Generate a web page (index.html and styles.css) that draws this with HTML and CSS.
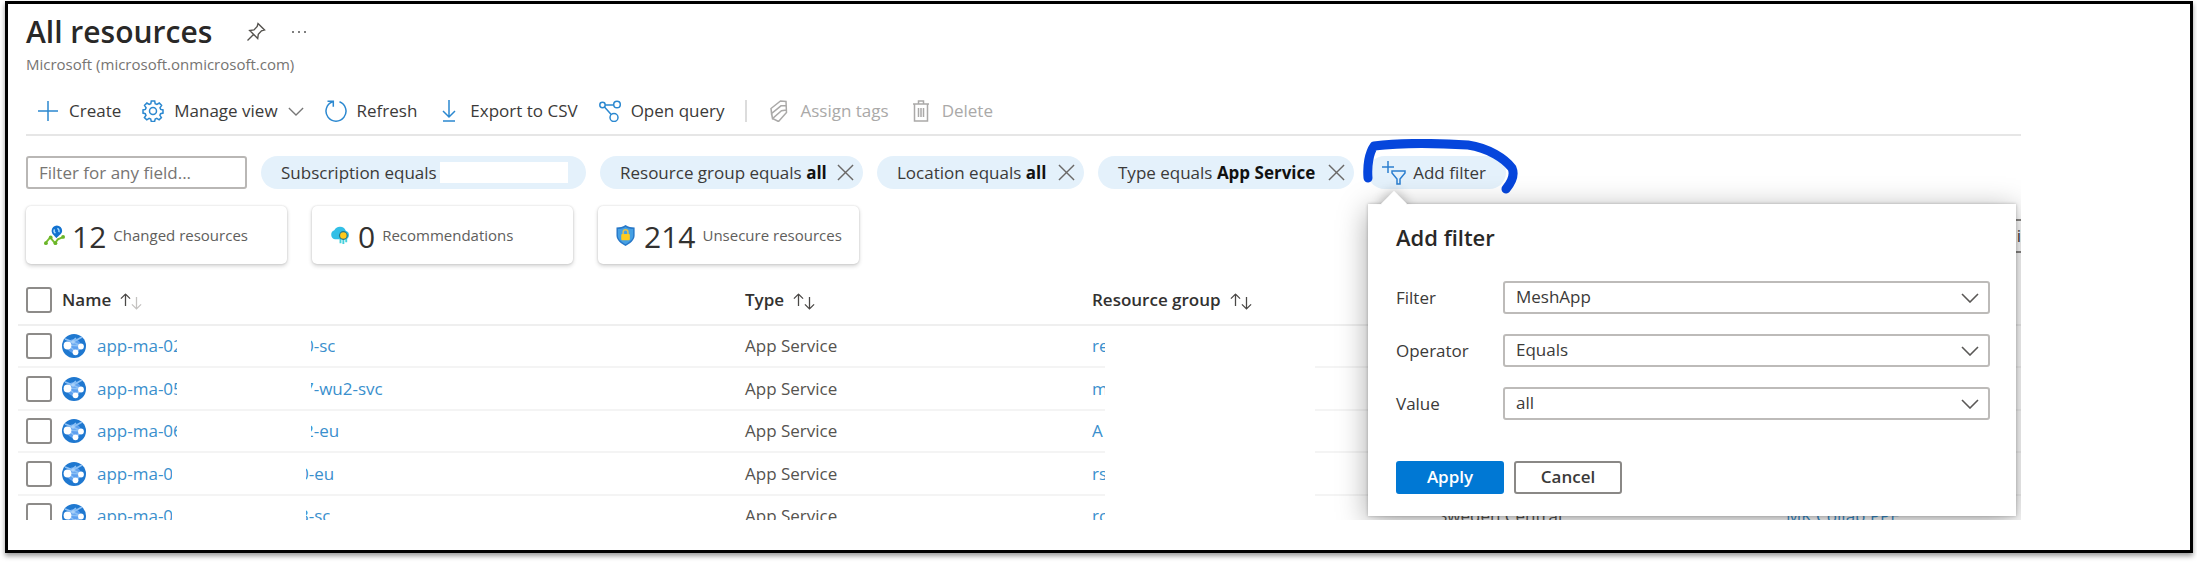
FILE: index.html
```html
<!DOCTYPE html>
<html lang="en">
<head>
<meta charset="utf-8">
<title>All resources</title>
<link rel="stylesheet" href="styles.css">
</head>
<body>
<svg class="defs" aria-hidden="true">
  <symbol id="chevron" viewBox="0 0 18 10"><path d="M1 1l8 8 8-8"/></symbol>
  <symbol id="close" viewBox="0 0 18 18"><path d="M1 1l16 16M17 1L1 17"/></symbol>
  <symbol id="up" viewBox="0 0 12 15"><path d="M6 14V1M1 6l5-5 5 5"/></symbol>
  <symbol id="down" viewBox="0 0 12 15"><path d="M6 1v13M1 9l5 5 5-5"/></symbol>
  <symbol id="globe" viewBox="0 0 24 24">
    <circle cx="12" cy="12" r="12" fill="#1f78d0"/>
    <circle cx="12" cy="12" r="7" fill="#5ea0ef"/>
    <path d="M3 5l8 3 9-5M5 12l9-8M6 11l13 1M14 18l5-6M14 18L6 11M11 8l8 4" stroke="#8cc0f5" stroke-width="1.6" fill="none"/>
    <circle cx="5.500" cy="11.500" r="3.900" fill="#fff"/>
    <circle cx="19" cy="12.500" r="2.900" fill="#fff"/>
    <circle cx="13.500" cy="18.300" r="2.900" fill="#fff"/>
    <circle cx="11" cy="8" r="1.800" fill="#a9d0f8"/>
  </symbol>
</svg>
<div class="frame">
<main class="view">
  <header class="heading">
    <h1>All resources</h1>
    <button class="plain" aria-label="Pin"><svg class="pin" viewBox="0 0 20 20"><path d="M12 1.500l6.500 6.500-3 .8-3.200 3.400-.6 4.300-8-8 4.300-.6 3.200-3.400zM7.500 12.500L1.500 18.500"/></svg></button>
    <button class="plain" aria-label="More"><svg class="more" viewBox="0 0 16 4"><circle cx="2" cy="2" r="1"/><circle cx="8" cy="2" r="1"/><circle cx="14" cy="2" r="1"/></svg></button>
  </header>
  <p class="tenant">Microsoft (microsoft.onmicrosoft.com)</p>

  <nav class="toolbar">
    <button class="tool"><svg class="ico" viewBox="0 0 22 22"><path d="M11 1v20M1 11h20"/></svg>Create</button>
    <button class="tool"><svg class="ico" viewBox="0 0 22 22"><circle cx="11" cy="11" r="3.500"/><path d="M9.300 1h3.400l.5 2.800 1.700.7L17.300 3l2.300 2.400-1.600 2.400.7 1.600 2.300.5v3.200l-2.400.6-.7 1.600 1.500 2.300-2.300 2.300-2.300-1.500-1.600.7-.6 2.400H9.300l-.6-2.400-1.600-.7-2.300 1.500-2.400-2.300L4 15.300l-.7-1.600L1 13.100V9.900l2.400-.5.7-1.600L2.500 5.400 4.900 3l2.300 1.500 1.600-.7z"/></svg>Manage view<svg class="chev" viewBox="0 0 18 10"><use href="#chevron"/></svg></button>
    <button class="tool"><svg class="ico" viewBox="0 0 22 22"><path d="M14.500 1.800a10 10 0 1 1-7 0M2.500 1.200h5.800v5.600"/></svg>Refresh</button>
    <button class="tool"><svg class="ico" viewBox="0 0 22 22"><path d="M11 0v17M5 11l6 6 6-6M5 21h12"/></svg>Export to CSV</button>
    <button class="tool"><svg class="ico" viewBox="0 0 22 22"><circle cx="3.500" cy="5" r="2.700"/><circle cx="18" cy="4.500" r="3.300"/><circle cx="15" cy="17.500" r="4"/><path d="M6.200 5h8.500M5.500 7l6.700 7.600"/></svg>Open query</button>
    <span class="divider"></span>
    <button class="tool" disabled><svg class="ico" viewBox="0 0 22 22"><path d="M3 8.500L12.500 1l5.500.5.500 11-8 9-6-3zM3 8.500l.5 5 9.500-7.700 5.300-.3M3.500 13.500l1 5 9-7.700 5-.8"/></svg>Assign tags</button>
    <button class="tool" disabled><svg class="ico" viewBox="0 0 22 22"><path d="M3 4h16M8.500 4V1h5v3M4.500 4v17h13V4M8.500 8v9M11 8v9M13.500 8v9"/></svg>Delete</button>
  </nav>

  <div class="filters">
    <input class="search" type="text" placeholder="Filter for any field..." aria-label="Filter for any field">
    <button class="chip chip-sub"><span>Subscription equals</span><span class="blank"></span></button>
    <button class="chip chip-group"><span>Resource group equals <b>all</b></span><svg class="x" viewBox="0 0 18 18"><use href="#close"/></svg></button>
    <button class="chip chip-loc"><span>Location equals <b>all</b></span><svg class="x" viewBox="0 0 18 18"><use href="#close"/></svg></button>
    <button class="chip chip-type"><span>Type equals <b>App Service</b></span><svg class="x" viewBox="0 0 18 18"><use href="#close"/></svg></button>
    <div class="add">
      <button class="chip chip-add"><svg class="funnel" viewBox="0 0 24 24"><path d="M6 0v12M0 6h12M10 10h13v2l-5 6v5h-3v-5l-5-6z"/></svg>Add filter</button>
      <form class="callout">
        <div class="beak"></div>
        <div class="callout-body">
          <h2>Add filter</h2>
          <div class="fields">
            <label for="f">Filter</label>
            <div class="pick"><select id="f"><option>MeshApp</option></select><svg viewBox="0 0 18 10"><use href="#chevron"/></svg></div>
            <label for="o">Operator</label>
            <div class="pick"><select id="o"><option>Equals</option></select><svg viewBox="0 0 18 10"><use href="#chevron"/></svg></div>
            <label for="v">Value</label>
            <div class="pick"><select id="v"><option>all</option></select><svg viewBox="0 0 18 10"><use href="#chevron"/></svg></div>
          </div>
          <div class="actions">
            <button type="button" class="btn primary">Apply</button>
            <button type="button" class="btn">Cancel</button>
          </div>
        </div>
      </form>
      <svg class="ink" viewBox="0 0 160 60"><path d="M10 39C9 27 11 14 16 7C40 4 78 4 110 6C131 9 147 20 154 29C157 36 153 44 148 50"/></svg>
    </div>
  </div>

  <section class="cards">
    <div class="card">
      <svg class="card-ico" viewBox="0 0 22 22"><path d="M1.500 19l5-6 5 6 3-4 6-2.500" fill="none" stroke="#76bc2d" stroke-width="2"/><g fill="#6bb52a"><circle cx="2" cy="19" r="2"/><circle cx="7" cy="13" r="2"/><circle cx="12" cy="19" r="2"/><circle cx="20" cy="12.500" r="2"/></g><path d="M13 14c-2-3-5-4.500-5-8a5.500 5.500 0 0 1 11 0c0 3.500-4 5-6 8z" fill="#1272d0"/><path d="M11 4.500a3 3 0 0 0 1 4M14 3.500a3 3 0 0 1 1.500 4" stroke="#a9dcff" stroke-width="1.500" fill="none"/></svg>
      <strong>12</strong><span>Changed resources</span>
    </div>
    <div class="card">
      <svg class="card-ico" viewBox="0 0 22 22"><path d="M5 15a5 5 0 0 1-.5-9.500A6.500 6.500 0 0 1 16.500 6a4.700 4.700 0 0 1 0 9z" fill="#32bfe6"/><path d="M11 13v6M14 13v7M17 13v5" stroke="#44d0dc" stroke-width="2"/><circle cx="14" cy="11" r="4.600" fill="#2c7480"/><circle cx="14" cy="11" r="3.400" fill="#ffca1a"/></svg>
      <strong>0</strong><span>Recommendations</span>
    </div>
    <div class="card">
      <svg class="card-ico" viewBox="0 0 22 22"><path d="M10 0c3 2 6 2.500 9.500 2.500V11c0 5-5 8.500-9.500 11C5.500 19.500.5 16 .5 11V2.500C4 2.500 7 2 10 0z" fill="#2878c8"/><path d="M10 2c2.500 1.500 5 2 8 2.200V11c0 4-4 7-8 9.200C6 18 2 15 2 11V4.200C5 4 7.500 3.500 10 2z" fill="#45a0e4"/><path d="M7.500 10V7.500a2.500 2.500 0 0 1 5 0V10" fill="none" stroke="#e4c04a" stroke-width="1.600"/><rect x="5.500" y="9.500" width="9" height="6.500" rx="1" fill="#ffcb1f"/></svg>
      <strong>214</strong><span>Unsecure resources</span>
    </div>
    <button class="edge">i</button>
  </section>

  <table class="grid">
    <colgroup><col class="c-check"><col class="c-name"><col class="c-type"><col class="c-rg"><col class="c-mask"><col class="c-gap"><col class="c-loc"><col></colgroup>
    <thead><tr>
      <th><input type="checkbox" aria-label="Select all"></th>
      <th><span class="sort">Name<svg class="arr" viewBox="0 0 12 15"><use href="#up"/></svg><svg class="arr low dim" viewBox="0 0 12 15"><use href="#down"/></svg></span></th>
      <th><span class="sort">Type<svg class="arr" viewBox="0 0 12 15"><use href="#up"/></svg><svg class="arr low" viewBox="0 0 12 15"><use href="#down"/></svg></span></th>
      <th colspan="2"><span class="sort">Resource group<svg class="arr" viewBox="0 0 12 15"><use href="#up"/></svg><svg class="arr low" viewBox="0 0 12 15"><use href="#down"/></svg></span></th>
      <th></th><th></th><th></th>
    </tr></thead>
    <tbody>
      <tr><td><input type="checkbox" aria-label="Select row 1"></td><td><a class="name" href="#"><svg class="globe" viewBox="0 0 24 24"><use href="#globe"/></svg><span class="head">app-ma-02</span><span class="tail"><span>0-sc</span></span></a></td><td>App Service</td><td><a class="cut" href="#">re</a></td><td class="mask"></td><td></td><td></td><td></td></tr>
      <tr><td><input type="checkbox" aria-label="Select row 2"></td><td><a class="name" href="#"><svg class="globe" viewBox="0 0 24 24"><use href="#globe"/></svg><span class="head">app-ma-05</span><span class="tail"><span>7-wu2-svc</span></span></a></td><td>App Service</td><td><a class="cut" href="#">m</a></td><td class="mask"></td><td></td><td></td><td></td></tr>
      <tr><td><input type="checkbox" aria-label="Select row 3"></td><td><a class="name" href="#"><svg class="globe" viewBox="0 0 24 24"><use href="#globe"/></svg><span class="head">app-ma-06</span><span class="tail"><span>2-eu</span></span></a></td><td>App Service</td><td><a class="cut" href="#">A</a></td><td class="mask"></td><td></td><td></td><td></td></tr>
      <tr><td><input type="checkbox" aria-label="Select row 4"></td><td><a class="name short" href="#"><svg class="globe" viewBox="0 0 24 24"><use href="#globe"/></svg><span class="head">app-ma-0</span><span class="tail"><span>0-eu</span></span></a></td><td>App Service</td><td><a class="cut" href="#">rs</a></td><td class="mask"></td><td></td><td></td><td></td></tr>
      <tr><td><input type="checkbox" aria-label="Select row 5"></td><td><a class="name short" href="#"><svg class="globe" viewBox="0 0 24 24"><use href="#globe"/></svg><span class="head">app-ma-0</span><span class="tail"><span>3-sc</span></span></a></td><td>App Service</td><td><a class="cut" href="#">rc</a></td><td class="mask"></td><td></td><td>Sweden Central</td><td><a href="#">MK Collab PPE</a></td></tr>
    </tbody>
  </table>
</main>
</div>
</body>
</html>
```
FILE: styles.css
```css
* { box-sizing: border-box; }
body {
  margin: 0;
  height: 100vh;
  padding: 1px 4px 9px 5px;
  overflow: hidden;
  background: #fff;
  color: #3b3a39;
  font: 17px/24px "Open Sans", "Noto Sans", sans-serif;
}
button, input, select { font: inherit; color: inherit; margin: 0; }
button { cursor: pointer; }
a { color: #3a8fcd; text-decoration: none; }
svg { fill: none; flex: none; }
.defs { position: absolute; width: 0; height: 0; }

.frame {
  height: 100%;
  border: 3px solid #000;
  box-shadow: 0 3px 5px rgba(0, 0, 0, .4);
  padding: 8px 169px 30px 10px;
}
.view {
  height: 100%;
  overflow: hidden;
  display: flex;
  flex-direction: column;
}
.view > * { flex-shrink: 0; }
.heading, .tenant, .filters, .cards { margin-left: 8px; }

.heading { display: flex; align-items: center; height: 40px; }
h1 { margin: 0; font-size: 30px; line-height: 40px; font-weight: 600; color: #292827; }
.plain { border: 0; background: none; padding: 0; display: flex; }
.pin { width: 20px; height: 20px; margin-left: 34px; stroke: #55534f; stroke-width: 1.4; }
.more { width: 16px; height: 4px; margin-left: 25px; fill: #555; }
.tenant { margin: 0 0 0 8px; font-size: 15px; line-height: 24px; color: #767472; }

.toolbar {
  display: flex;
  align-items: center;
  height: 60px;
  margin: 0 0 20px 8px;
  padding: 12px 0 0 11px;
  gap: 21px;
  border-bottom: 2px solid #e6e6e6;
}
.tool {
  display: flex;
  align-items: center;
  gap: 10px;
  padding: 0;
  border: 0;
  background: none;
  white-space: nowrap;
}
.ico { width: 22px; height: 22px; stroke: #2b88d0; stroke-width: 1.5; }
.tool:disabled { color: #aaa9a8; }
.tool:disabled .ico { stroke: #aaa9a8; }
.chev { width: 16px; height: 9px; stroke: #777; stroke-width: 1.5; }
.divider { width: 2px; height: 22px; background: #dcdcdc; }

.filters { display: flex; gap: 14px; height: 33px; }
.search {
  width: 221px;
  padding: 0 11px;
  border: 2px solid #b9b7b5;
  border-radius: 3px;
  background: #fff;
}
.search::placeholder { color: #777573; opacity: 1; }
.chip {
  display: flex;
  align-items: center;
  justify-content: space-between;
  height: 33px;
  padding: 0 9px 0 20px;
  border: 0;
  border-radius: 17px;
  background: #e4f1fb;
  white-space: nowrap;
}
.chip b { color: #111; }
.chip-sub { width: 325px; padding-right: 18px; gap: 3px; }
.chip-group { width: 263px; }
.chip-loc { width: 207px; }
.chip-type { width: 256px; }
.chip-add { width: 138px; padding: 0 20px 0 14px; }
.blank { flex: 1; height: 21px; background: #fff; }
.x { width: 17px; height: 17px; stroke: #6b6967; stroke-width: 1.5; }
.funnel { width: 24px; height: 24px; stroke: #2b7fd0; stroke-width: 1.5; }

.add { position: relative; }
.ink {
  position: absolute;
  left: -10px;
  top: -17px;
  width: 160px;
  height: 60px;
  stroke: #0646dc;
  stroke-width: 9;
  stroke-linecap: round;
  stroke-linejoin: round;
  pointer-events: none;
}
.callout { position: absolute; left: 0; top: 48px; width: 648px; z-index: 1; }
/* Only the half of the rotated square above the panel edge is painted. */
.beak {
  position: absolute;
  z-index: 1;
  left: 16px;
  top: -9px;
  width: 20px;
  height: 20px;
  transform: rotate(45deg);
  background: #fff;
  box-shadow: 0 0 12px rgba(0, 0, 0, .3);
  clip-path: polygon(-40px -40px, 59px -40px, -40px 59px);
}
.callout-body {
  padding: 18px 26px 22px 28px;
  background: #fff;
  box-shadow: 0 0 3px rgba(0, 0, 0, .25), 0 6px 28px rgba(0, 0, 0, .35);
}
h2 { margin: 0 0 29px; font-size: 22px; line-height: 30px; font-weight: 600; color: #292827; }
.fields { display: grid; grid-template-columns: 107px 1fr; row-gap: 20px; align-items: center; }
.pick { position: relative; display: flex; }
.pick select {
  appearance: none;
  width: 100%;
  height: 33px;
  padding: 0 40px 2px 11px;
  border: 2px solid #bdbbb9;
  border-radius: 3px;
  background: #fff;
}
.pick svg { position: absolute; right: 11px; top: 12px; width: 18px; height: 10px; stroke: #5a5856; stroke-width: 1.6; }
.actions { display: flex; gap: 10px; margin-top: 41px; }
.btn {
  width: 108px;
  height: 33px;
  padding: 0 0 2px;
  border: 2px solid #8a8886;
  border-radius: 3px;
  background: #fff;
  font-weight: 600;
}
.primary { border-color: #0078d4; background: #0078d4; color: #fff; }

.cards { display: flex; gap: 25px; margin-top: 17px; height: 58px; }
.card {
  display: flex;
  align-items: center;
  width: 261px;
  padding: 0 18px;
  border-radius: 5px;
  background: #fff;
  box-shadow: 0 0 2px rgba(0, 0, 0, .16), 0 2px 4px rgba(0, 0, 0, .18);
  font-size: 15px;
  white-space: nowrap;
}
.card-ico { width: 21px; height: 21px; margin-right: 7px; }
.card strong { font-size: 30px; line-height: 40px; font-weight: 500; color: #323130; margin-right: 7px; padding-top: 4px; }
.card span { color: #605e5c; }
.edge {
  width: 180px;
  height: 34px;
  margin: 13px 0 0 auto;
  padding: 0;
  border: 2px solid #8a8886;
  border-width: 2px 0;
  background: none;
  text-align: right;
}

.grid { width: 100%; table-layout: fixed; border-collapse: separate; border-spacing: 0; margin-top: 12px; }
.c-check { width: 44px; }
.c-name { width: 683px; }
.c-type { width: 347px; }
.c-rg { width: 13px; }
.c-mask { width: 210px; }
.c-gap { width: 123px; }
.c-loc { width: 348px; }
.grid th, .grid td { padding: 0; text-align: left; vertical-align: middle; white-space: nowrap; border-bottom: 2px solid #f4f4f4; }
.grid th { height: 50px; font-weight: 600; color: #323130; border-color: #efefef; }
.grid td { height: 42px; color: #55534f; }
.grid tr:nth-child(even) td { height: 43px; }
.grid td.mask { border-color: #fff; }
.grid input {
  appearance: none;
  display: block;
  width: 26px;
  height: 26px;
  margin-left: 8px;
  border: 2px solid #8d8b89;
  border-radius: 3px;
  background: #fff;
}
.sort { display: flex; align-items: center; }
.arr { width: 11px; height: 14px; stroke: #4a4846; stroke-width: 1.4; margin-left: 9px; }
.arr.low { margin: 5px 0 0; }
.arr.dim { stroke: #c4c2c0; }
.name { display: flex; align-items: center; line-height: 24px; }
.globe { width: 24px; height: 24px; }
.head { width: 80px; margin-left: 11px; overflow: hidden; }
.short .head { width: 75px; }
.tail { margin-left: 134px; overflow: hidden; }
.tail span { display: block; margin-left: -7px; }
.cut { display: block; width: 13px; overflow: hidden; }
```
